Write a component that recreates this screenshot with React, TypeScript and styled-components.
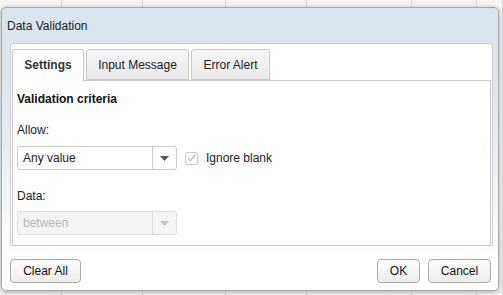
import React from "react";
import styled, { createGlobalStyle } from "styled-components";

const GlobalStyle = createGlobalStyle`
  html, body {
    margin: 0;
    padding: 0;
    width: 503px;
    height: 295px;
    overflow: hidden;
    background: #f5f5f5;
    font-family: "Liberation Sans", Arial, sans-serif;
  }
`;

const COLUMNS = [62, 81, 83, 81, 105, 65, 26];

const Sheet = styled.div`
  position: relative;
  width: 503px;
  height: 295px;
  display: flex;
`;

const SheetColumn = styled.div<{ $w: number }>`
  width: ${(p) => p.$w}px;
  flex: none;
  border-right: 1px solid #d8d8d8;
  box-sizing: border-box;
`;

const Dialog = styled.div`
  position: absolute;
  left: 1px;
  top: 7px;
  width: 498px;
  height: 284px;
  box-sizing: border-box;
  border: 1px solid #a9a9a9;
  border-radius: 5px;
  background: linear-gradient(to bottom, #dae5ee 0, #dae5ee 60px, #f3f6f8 200px, #ffffff 250px);
  box-shadow: 0 1px 5px rgba(0, 0, 0, 0.35);
  display: flex;
  flex-direction: column;
`;

const TitleBar = styled.div`
  height: 35px;
  line-height: 37px;
  padding-left: 5px;
  font-size: 12px;
  color: #222;
  flex: none;
`;

const TabsBox = styled.div`
  margin: 0 5px 0 8px;
  padding: 5px 1px 0;
  border: 1px solid #cfcfcf;
  border-bottom: none;
  border-radius: 4px 4px 0 0;
  background: #fff;
  display: flex;
  flex-direction: column;
`;

const TabList = styled.div`
  display: flex;
  gap: 2px;
  height: 31px;
  position: relative;
  z-index: 1;
`;

const Tab = styled.div<{ $active?: boolean; $w: number }>`
  width: ${(p) => p.$w}px;
  height: ${(p) => (p.$active ? 32 : 31)}px;
  box-sizing: border-box;
  text-align: center;
  line-height: 31px;
  font-size: 12px;
  font-weight: ${(p) => (p.$active ? "bold" : "normal")};
  color: ${(p) => (p.$active ? "#333" : "#222")};
  border: 1px solid #cacaca;
  border-bottom: ${(p) => (p.$active ? "none" : "1px solid #cacaca")};
  border-radius: 3px 3px 0 0;
  background: ${(p) => (p.$active ? "#fff" : "linear-gradient(to bottom, #f7f7f7, #e9e9e9)")};
  white-space: nowrap;
`;

const Panel = styled.div`
  height: 166px;
  box-sizing: border-box;
  border: 1px solid #cacaca;
  padding: 11px 4px 0;
  display: flex;
  flex-direction: column;
  align-items: flex-start;
`;

const Heading = styled.div`
  font-size: 12px;
  line-height: 14px;
  font-weight: bold;
  color: #111;
`;

const Label = styled.div<{ $top: number }>`
  margin-top: ${(p) => p.$top}px;
  font-size: 12px;
  line-height: 14px;
  color: #222;
`;

const Row = styled.div<{ $top: number }>`
  margin-top: ${(p) => p.$top}px;
  display: flex;
  align-items: center;
  gap: 8px;
`;

const SelectBox = styled.div<{ $disabled?: boolean }>`
  width: 160px;
  height: 24px;
  box-sizing: border-box;
  display: flex;
  border: 1px solid ${(p) => (p.$disabled ? "#dedede" : "#cccccc")};
  border-radius: 3px;
  background: ${(p) => (p.$disabled ? "#f4f4f4" : "#fff")};
  font-size: 12px;
  color: ${(p) => (p.$disabled ? "#b8b8b8" : "#222")};
`;

const SelectValue = styled.div`
  flex: 1;
  padding-left: 5px;
  line-height: 22px;
`;

const SelectButton = styled.div<{ $disabled?: boolean }>`
  width: 23px;
  border-left: 1px solid ${(p) => (p.$disabled ? "#dedede" : "#cccccc")};
  display: flex;
  align-items: center;
  justify-content: center;
  color: ${(p) => (p.$disabled ? "#c4c4c4" : "#555")};
`;

const Check = styled.div`
  width: 13px;
  height: 13px;
  box-sizing: border-box;
  border: 1px solid #cdcdcd;
  border-radius: 2px;
  background: #fafafa;
  display: flex;
  align-items: center;
  justify-content: center;
`;

const CheckLabel = styled.span`
  font-size: 12px;
  color: #222;
`;

const Footer = styled.div`
  display: flex;
  align-items: center;
  padding: 13px 7px 0 8px;
`;

const Spacer = styled.div`
  flex: 1;
`;

const Button = styled.button<{ $w: number }>`
  width: ${(p) => p.$w}px;
  height: 24px;
  margin-left: 8px;
  padding: 0;
  border: 1px solid #ababab;
  border-radius: 4px;
  background: linear-gradient(to bottom, #ffffff, #ececec);
  font-family: "Liberation Sans", Arial, sans-serif;
  font-size: 12px;
  color: #111;
  &:first-child {
    margin-left: 0;
  }
`;

function Caret() {
  return (
    <svg width="9" height="5" viewBox="0 0 9 5">
      <path d="M0 0 H9 L4.5 5 Z" fill="currentColor" />
    </svg>
  );
}

function Select({ value, disabled }: { value: string; disabled?: boolean }) {
  return (
    <SelectBox $disabled={disabled}>
      <SelectValue>{value}</SelectValue>
      <SelectButton $disabled={disabled}>
        <Caret />
      </SelectButton>
    </SelectBox>
  );
}

export default function App() {
  return (
    <>
      <GlobalStyle />
      <Sheet>
        {COLUMNS.map((w, i) => (
          <SheetColumn key={i} $w={w} />
        ))}
        <Dialog>
          <TitleBar>Data Validation</TitleBar>
          <TabsBox>
            <TabList>
              <Tab $active $w={72}>Settings</Tab>
              <Tab $w={103}>Input Message</Tab>
              <Tab $w={79}>Error Alert</Tab>
            </TabList>
            <Panel>
              <Heading>Validation criteria</Heading>
              <Label $top={17}>Allow:</Label>
              <Row $top={9}>
                <Select value="Any value" />
                <Check>
                  <svg width="9" height="8" viewBox="0 0 9 8">
                    <path d="M1 4.2 L3.4 6.6 L8 1" fill="none" stroke="#bcbcbc" strokeWidth="1.2" />
                  </svg>
                </Check>
                <CheckLabel>Ignore blank</CheckLabel>
              </Row>
              <Label $top={19}>Data:</Label>
              <Row $top={8}>
                <Select value="between" disabled />
              </Row>
            </Panel>
          </TabsBox>
          <Footer>
            <Button $w={71}>Clear All</Button>
            <Spacer />
            <Button $w={43}>OK</Button>
            <Button $w={63}>Cancel</Button>
          </Footer>
        </Dialog>
      </Sheet>
    </>
  );
}
